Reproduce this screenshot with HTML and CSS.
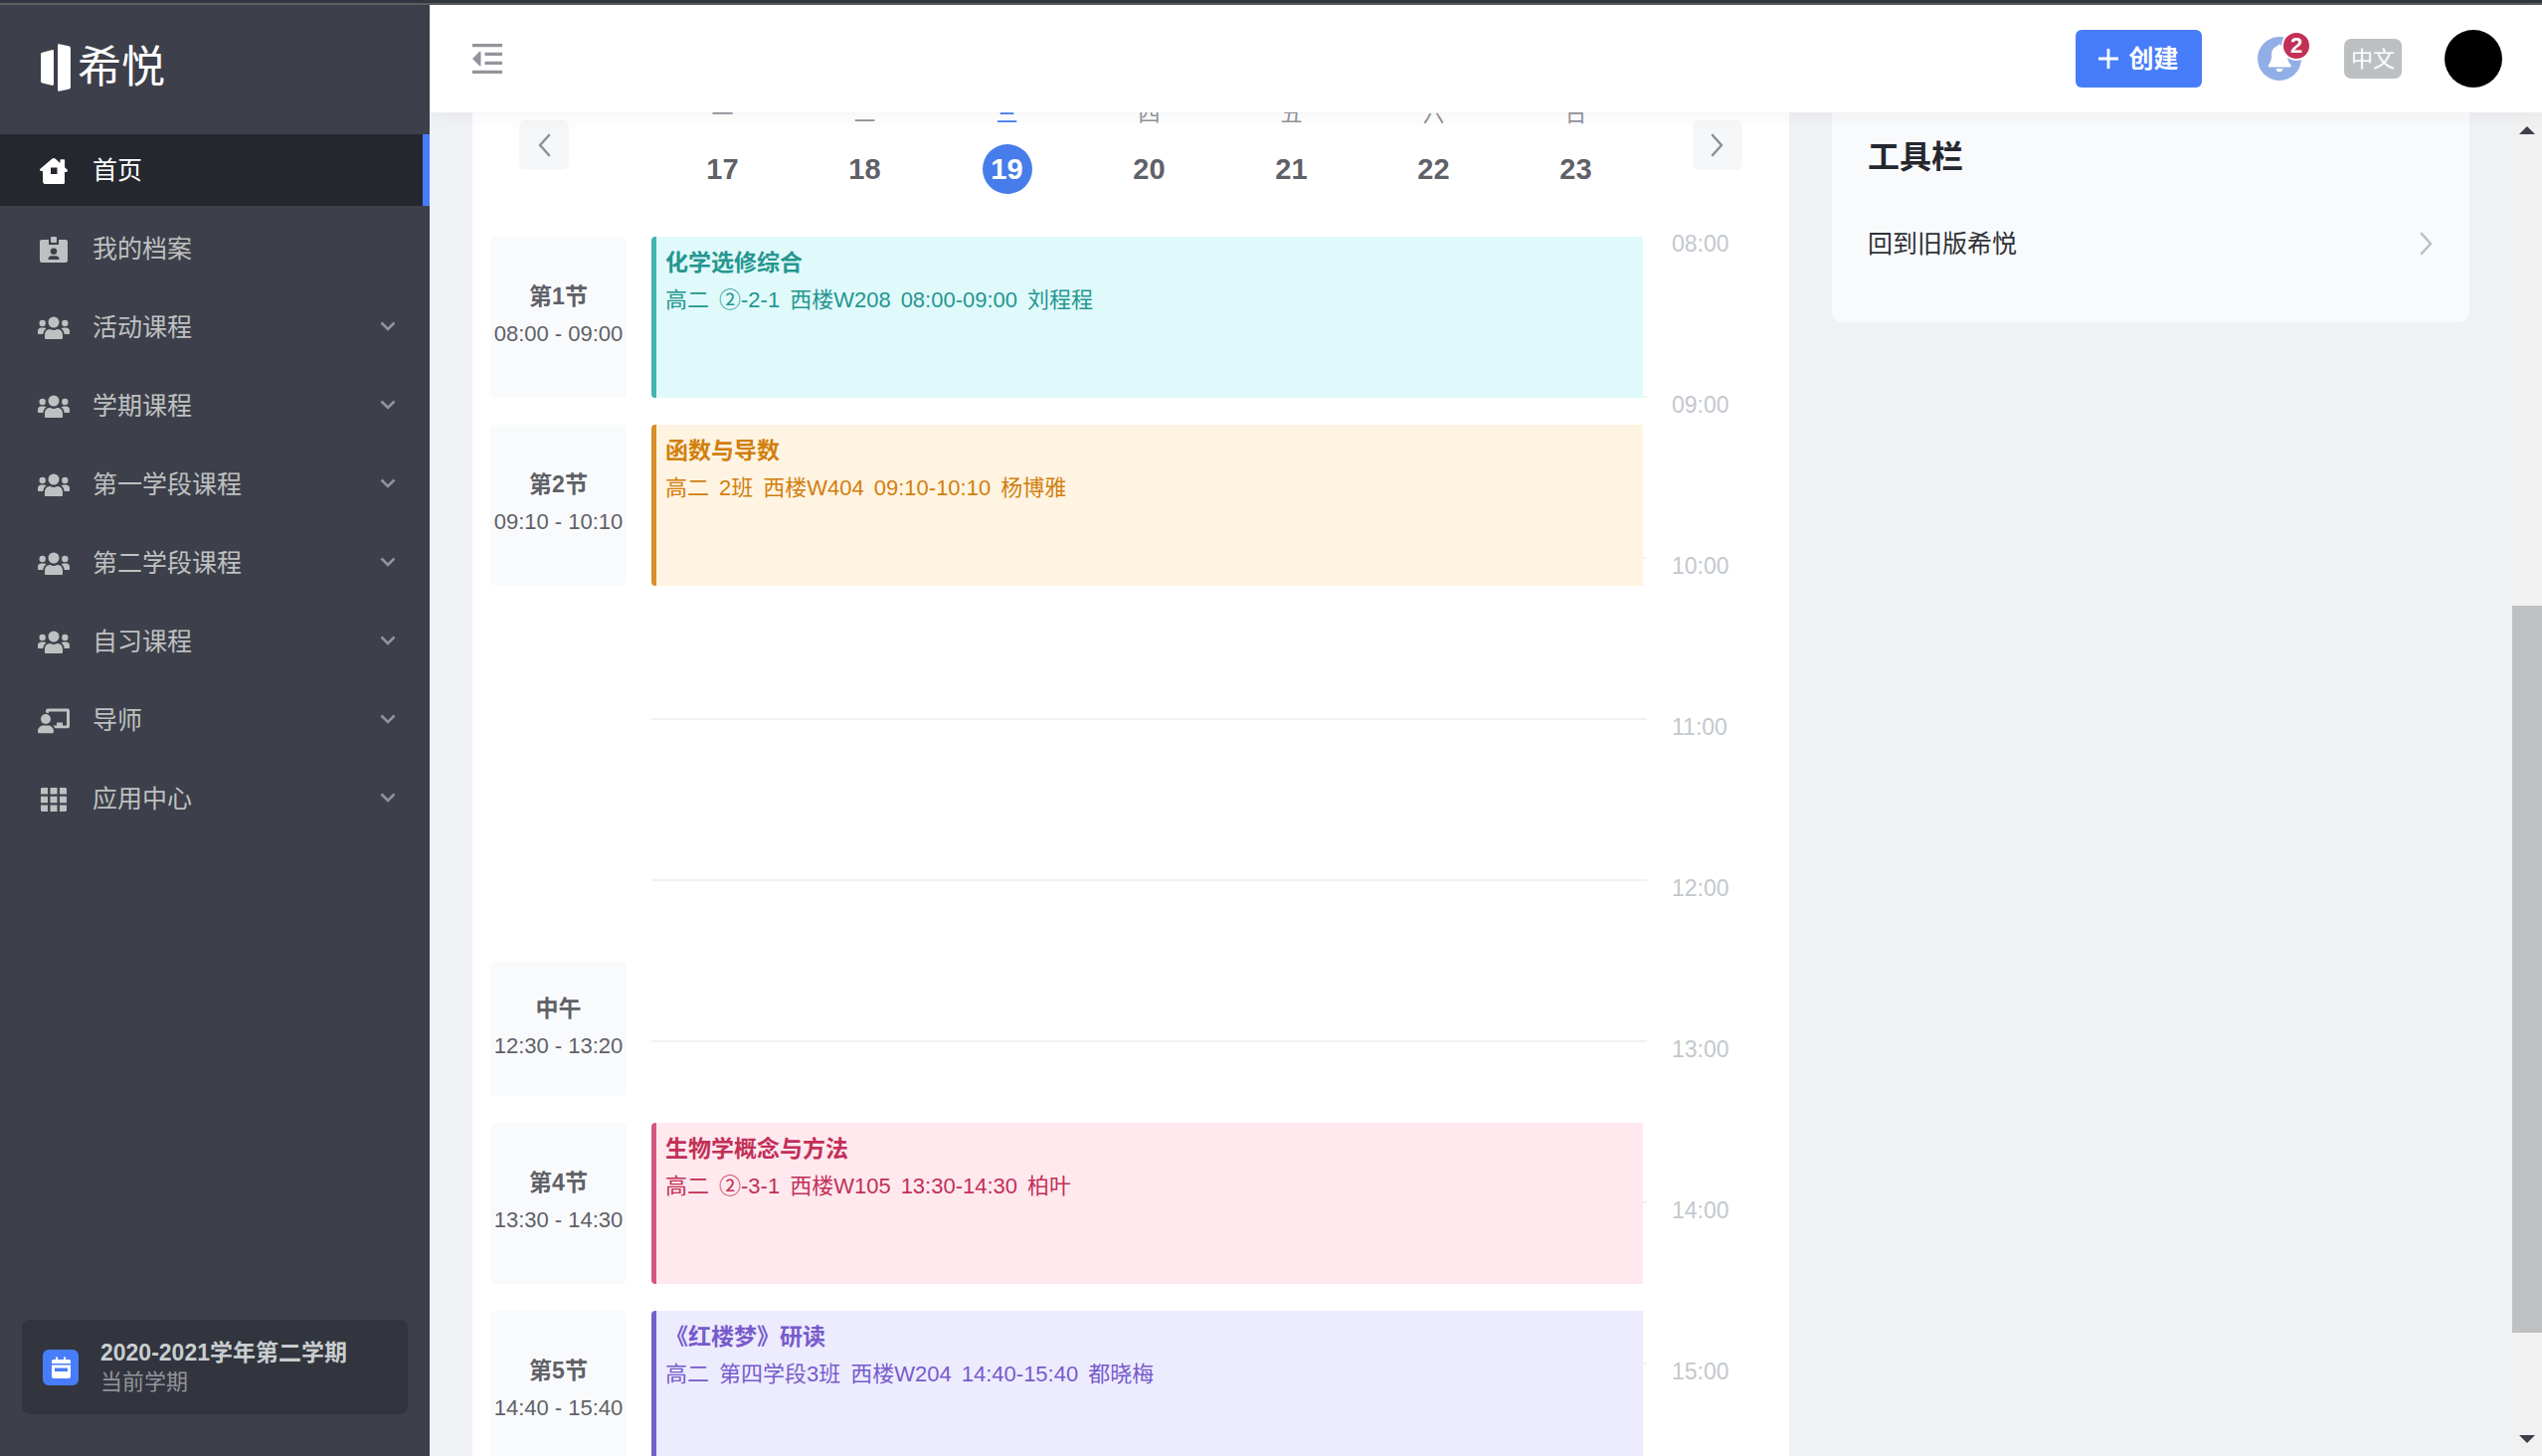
FILE: index.html
```html
<!DOCTYPE html>
<html lang="zh-CN">
<head>
<meta charset="utf-8">
<title>希悦</title>
<link rel="stylesheet" href="styles.css">
</head>
<body>
<svg class="sprite" aria-hidden="true">
  <symbol id="i-group" viewBox="0 0 32 24">
    <circle cx="16" cy="6" r="5.5"/><circle cx="4.7" cy="7" r="3.2"/><circle cx="27.3" cy="7" r="3.2"/>
    <path d="M7 22v-3c0-4 2.500-6 5.500-6 1.200.6 2.300.9 3.500.9s2.300-.3 3.500-.9c3 0 5.500 2 5.500 6v3c0 .7-.5 1-1 1H8c-.5 0-1-.3-1-1z"/>
    <path d="M0 15c0-2 1.500-3.500 3.500-3.500h2.500c.9 0 1.800.4 2.400 1C6.500 13.700 5.600 15.500 5.300 18H1c-.6 0-1-.4-1-1zM32 15c0-2-1.500-3.500-3.500-3.500H26c-.9 0-1.800.4-2.400 1 1.900 1.200 2.800 3 3.100 5.500H31c.6 0 1-.4 1-1z"/>
  </symbol>
  <symbol id="i-down" viewBox="0 0 16 10"><path d="M1.500 1.500 8 8l6.500-6.500" fill="none" stroke="currentColor" stroke-width="2.600"/></symbol>
  <symbol id="i-left" viewBox="0 0 14 24"><path d="M12 2 3 12l9 10" fill="none" stroke="currentColor" stroke-width="2.600" stroke-linecap="round" stroke-linejoin="round"/></symbol>
  <symbol id="i-right" viewBox="0 0 14 24"><path d="m2 2 9 10-9 10" fill="none" stroke="currentColor" stroke-width="2.600" stroke-linecap="round" stroke-linejoin="round"/></symbol>
</svg>
<div class="strip"></div>
<div class="app">
  <aside class="sidebar">
    <a class="brand" href="#">
      <svg width="30" height="48" viewBox="0 0 30 48"><path d="M0 10.500Q0 9 1.500 8.700L11 6.200Q13 5.800 13 7.500v33q0 1.700-2 1.300L1.500 39.500Q0 39.200 0 37.500zM17 1.500Q17 0 18.500.2L28 2.200Q30 2.600 30 4.500v39q0 1.900-2 2.300l-9.500 2Q17 48 17 46.500z"/></svg>
      <span>希悦</span>
    </a>
    <nav class="menu">
      <a class="item active" href="#">
        <svg width="28" height="26" viewBox="0 0 28 26"><path fill-rule="evenodd" d="M14 0q.8 0 1.500.6L20.500 5V2q0-.8.8-.8h3q.8 0 .8.800v7.300l2.400 2.300q.7.800.4 1.500-.3.800-1.200.8H25v10.500q0 1.500-1.500 1.500h-19Q3 25.100 3 23.600V13.100H1.300q-.9 0-1.200-.8-.3-.7.4-1.500L12.500.6Q13.200 0 14 0zM11 9.500v6.500h6.500V9.500z"/></svg>
        <span>首页</span>
      </a>
      <a class="item" href="#">
        <svg width="28" height="26" viewBox="0 0 28 26"><rect x="11" y="0" width="6" height="6" rx="1"/><path fill-rule="evenodd" d="M2 3h7v5h10V3h7q2 0 2 2v19q0 2-2 2H2q-2 0-2-2V5q0-2 2-2zM14 11.500a3.300 3.300 0 1 0 0 6.600 3.300 3.300 0 0 0 0-6.600zM8.500 23h11q0-3.700-3.500-3.700h-4q-3.500 0-3.500 3.700z"/></svg>
        <span>我的档案</span>
      </a>
      <a class="item" href="#"><svg width="32" height="24"><use href="#i-group"/></svg><span>活动课程</span><svg class="arrow" width="16" height="10"><use href="#i-down"/></svg></a>
      <a class="item" href="#"><svg width="32" height="24"><use href="#i-group"/></svg><span>学期课程</span><svg class="arrow" width="16" height="10"><use href="#i-down"/></svg></a>
      <a class="item" href="#"><svg width="32" height="24"><use href="#i-group"/></svg><span>第一学段课程</span><svg class="arrow" width="16" height="10"><use href="#i-down"/></svg></a>
      <a class="item" href="#"><svg width="32" height="24"><use href="#i-group"/></svg><span>第二学段课程</span><svg class="arrow" width="16" height="10"><use href="#i-down"/></svg></a>
      <a class="item" href="#"><svg width="32" height="24"><use href="#i-group"/></svg><span>自习课程</span><svg class="arrow" width="16" height="10"><use href="#i-down"/></svg></a>
      <a class="item" href="#">
        <svg width="32" height="26" viewBox="0 0 32 26"><circle cx="8" cy="11" r="5"/><path d="M0 23.500C0 20 2.500 17.500 5.500 17.500h5c3 0 5.500 2.500 5.500 6 0 1-.5 1.800-1.500 1.800h-13C.5 25.300 0 24.500 0 23.500zM8 4.500V2.500Q8 .5 10 .5h20q2 0 2 2v15.800q0 2-2 2H17.300q-.8-1.600-2-2.800H19v-3h6v3h4V3.500H11v1.700Q9.600 4.500 8 4.500z"/></svg>
        <span>导师</span><svg class="arrow" width="16" height="10"><use href="#i-down"/></svg>
      </a>
      <a class="item" href="#">
        <svg width="26" height="24" viewBox="0 0 26 24"><path d="M1 0h6v6.500H0V1zM9.500 0h7v6.500h-7zM19 0h6l1 1v5.500h-7zM0 8.800h7v6.400H0zM9.500 8.800h7v6.400h-7zM19 8.800h7v6.400h-7zM0 17.500h7V24H1l-1-1zM9.500 17.500h7V24h-7zM19 17.500h7V23l-1 1h-6z"/></svg>
        <span>应用中心</span><svg class="arrow" width="16" height="10"><use href="#i-down"/></svg>
      </a>
    </nav>
    <div class="term">
      <svg width="36" height="36" viewBox="0 0 36 36"><rect width="36" height="36" rx="6" fill="#477dfa"/><path fill="#fff" fill-rule="evenodd" d="M9 14v-2.500Q9 10 10.500 10H13V7.500h2V10h6V7.500h2V10h3.500q1.500 0 1.500 1.500V14zM9 15.500h19V27q0 2-2 2H11q-2 0-2-2zM12 18.500V22h13v-3.500z"/></svg>
      <div><strong>2020-2021学年第二学期</strong><span>当前学期</span></div>
    </div>
  </aside>
  <div class="main">
    <header class="topbar">
      <button class="fold" aria-label="收起菜单"><svg width="30" height="30" viewBox="0 0 30 30"><path d="M0 0h30v3.200H0zM12.500 8.800H30V12H12.500zM12.500 17.800H30V21H12.500zM0 26.800h30V30H0zM0 15l7-7q1.500-1 1.500.5v13q0 1.500-1.500.5z"/></svg></button>
      <button class="create"><svg width="20" height="20" viewBox="0 0 20 20"><path d="M10 0v20M0 10h20" stroke="#fff" stroke-width="2.800"/></svg><span>创建</span></button>
      <button class="bell" aria-label="通知"><svg width="44" height="44" viewBox="0 0 44 44"><circle cx="22" cy="22" r="22" fill="#92aee6"/><path fill="#fff" d="M22 7.500q1.600 0 1.800 1.800c4.200 1 6.200 4.200 6.200 8.200 0 5.500.8 7.500 3.300 10.500.9 1.200.4 2.500-1 2.500H12.200c-1.600 0-2-1.300-1-2.500C13.500 25 14 23 14 17.500c0-4 2.200-7.200 6.200-8.200q.2-1.800 1.800-1.800zM18.500 32h7q-.5 3.300-3.500 3.300t-3.500-3.300z"/></svg><span class="badge">2</span></button>
      <button class="lang">中文</button>
      <a class="avatar" href="#" aria-label="个人中心"></a>
    </header>
    <div class="viewport">
      <div class="content">
        <section class="card">
          <div class="week cols">
            <button class="step" aria-label="上一周"><svg width="14" height="24"><use href="#i-left"/></svg></button>
            <div class="days">
              <div class="day"><span>一</span><b>17</b></div>
              <div class="day"><span>二</span><b>18</b></div>
              <div class="day today"><span>三</span><b>19</b></div>
              <div class="day"><span>四</span><b>20</b></div>
              <div class="day"><span>五</span><b>21</b></div>
              <div class="day"><span>六</span><b>22</b></div>
              <div class="day"><span>日</span><b>23</b></div>
            </div>
            <button class="step next" aria-label="下一周"><svg width="14" height="24"><use href="#i-right"/></svg></button>
          </div>
          <div class="timeline cols">
            <i class="hour h08"></i><i class="hour h09"></i><i class="hour h10"></i><i class="hour h11"></i><i class="hour h12"></i><i class="hour h13"></i><i class="hour h14"></i><i class="hour h15"></i>
            <time class="h08">08:00</time><time class="h09">09:00</time><time class="h10">10:00</time><time class="h11">11:00</time><time class="h12">12:00</time><time class="h13">13:00</time><time class="h14">14:00</time><time class="h15">15:00</time>
            <div class="period p1"><b>第1节</b><span>08:00 - 09:00</span></div>
            <div class="period p2"><b>第2节</b><span>09:10 - 10:10</span></div>
            <div class="period noon"><b>中午</b><span>12:30 - 13:20</span></div>
            <div class="period p4"><b>第4节</b><span>13:30 - 14:30</span></div>
            <div class="period p5"><b>第5节</b><span>14:40 - 15:40</span></div>
            <a class="event p1 teal" href="#"><b>化学选修综合</b><div class="info"><span>高二</span><span>②-2-1</span><span>西楼W208</span><span>08:00-09:00</span><span>刘程程</span></div></a>
            <a class="event p2 amber" href="#"><b>函数与导数</b><div class="info"><span>高二</span><span>2班</span><span>西楼W404</span><span>09:10-10:10</span><span>杨博雅</span></div></a>
            <a class="event p4 rose" href="#"><b>生物学概念与方法</b><div class="info"><span>高二</span><span>②-3-1</span><span>西楼W105</span><span>13:30-14:30</span><span>柏叶</span></div></a>
            <a class="event p5 violet" href="#"><b>《红楼梦》研读</b><div class="info"><span>高二</span><span>第四学段3班</span><span>西楼W204</span><span>14:40-15:40</span><span>都晓梅</span></div></a>
          </div>
        </section>
        <section class="tools">
          <h2>工具栏</h2>
          <a href="#"><span>回到旧版希悦</span><svg width="14" height="24"><use href="#i-right"/></svg></a>
        </section>
      </div>
      <div class="scroll">
        <div class="rail before"><svg width="16" height="8"><path d="M0 8 8 0l8 8z"/></svg></div>
        <div class="thumb"></div>
        <div class="rail after"><svg width="16" height="8"><path d="m0 0 8 8 8-8z"/></svg></div>
      </div>
    </div>
  </div>
</div>
</body>
</html>
```
FILE: styles.css
```css
* { box-sizing: border-box; }
body {
  margin: 0;
  height: 100vh;
  display: flex;
  flex-direction: column;
  overflow: hidden;
  font: 22px/1 "Liberation Sans", "Noto Sans CJK SC", sans-serif;
  color: #5f6167;
  background: #f0f1f5;
}
a { color: inherit; text-decoration: none; }
button { font: inherit; color: inherit; border: 0; padding: 0; background: none; cursor: pointer; }
svg { display: block; fill: currentColor; flex: none; }
.sprite { position: absolute; width: 0; height: 0; }

.strip { flex: none; height: 5px; background: #323841; border-bottom: 2px solid #5c5e62; }
.app { flex: 1; min-height: 0; display: flex; }

/* sidebar */
.sidebar {
  flex: none;
  width: 432px;
  display: flex;
  flex-direction: column;
  background: #3d404a;
  color: #bfc0c1;
}
.brand { height: 130px; padding: 0 0 4px 41px; display: flex; align-items: center; gap: 7px; color: #fff; font-size: 44px; }
.menu { flex: 1; display: flex; flex-direction: column; gap: 7px; font-size: 25px; }
.item { height: 72px; padding: 1px 34px 0 36px; display: grid; grid-template-columns: 36px 1fr 16px; gap: 21px; align-items: center; }
.item svg { justify-self: center; }
.item .arrow { color: #92949b; margin-bottom: 4px; }
.active { background: #25272f; color: #fff; border-right: 7px solid #477dfa; }
.term { margin: 0 22px 42px; padding: 0 21px; height: 95px; display: flex; align-items: center; gap: 22px; border-radius: 8px; background: #32353d; }
.term strong, .term span { display: block; line-height: 30px; }
.term strong { font-size: 23px; color: #c8ced0; }
.term span { color: #92949b; }

/* top bar */
.main { flex: 1; min-width: 0; display: flex; flex-direction: column; }
.topbar {
  flex: none;
  position: relative;
  z-index: 1;
  height: 108px;
  padding: 0 40px 0 43px;
  display: flex;
  align-items: center;
  gap: 43px;
  background: #fff;
  box-shadow: 0 0 22px rgba(0, 0, 0, .06);
}
.fold { margin-right: auto; color: #92949b; }
.create { width: 127px; height: 58px; margin-right: 13px; display: flex; align-items: center; justify-content: center; gap: 10px; border-radius: 6px; background: #477dfa; color: #fff; font-size: 25px; font-weight: bold; }
.bell { position: relative; }
.badge {
  position: absolute;
  top: -6px;
  right: -10px;
  width: 30px;
  height: 30px;
  border: 2px solid #fff;
  border-radius: 50%;
  background: #c22f57;
  color: #fff;
  font-weight: bold;
  line-height: 26px;
}
.lang { width: 58px; height: 40px; padding-top: 2px; border-radius: 7px; background: #bdc0c2; color: #fff; }
.avatar { width: 58px; height: 58px; border-radius: 50%; background: #000; }

/* page body, partly scrolled under the top bar */
.viewport { flex: 1; min-height: 0; display: flex; }
.content { flex: 1; min-width: 0; margin-top: -20px; padding: 0 43px; display: flex; align-items: flex-start; gap: 43px; }
.card { flex: 1; min-width: 0; padding: 0 18px; background: #fff; }
.cols { display: grid; grid-template-columns: 137px 1fr 100px; column-gap: 25px; }

.week { padding-bottom: 43px; align-items: center; }
.step { width: 50px; height: 50px; margin: 3px 0 0 29px; display: grid; place-items: center; border-radius: 6px; background: #f6f7f8; color: #8f9196; }
.next { margin: 3px 29px 0 0; justify-self: end; }
.days { display: grid; grid-template-columns: repeat(7, 1fr); }
.day { display: flex; flex-direction: column; align-items: center; gap: 8px; color: #92949b; }
.day span { line-height: 44px; }
.day b { width: 50px; line-height: 50px; border-radius: 50%; text-align: center; font-size: 29px; color: #5f6167; }
.today span { color: #477dfa; }
.day.today b { background: #477dea; color: #fff; }

/* one row stands for ten minutes, starting at 08:00 */
.timeline { grid-template-rows: repeat(48, 27px); }
.hour { grid-column: 2; border-bottom: 2px solid #f0f1f2; }
time { grid-column: 3; margin-top: -4px; font-size: 23px; color: #c3c8cd; }
.h08 { grid-row: 1 / span 6; }
.h09 { grid-row: 7 / span 6; }
.h10 { grid-row: 13 / span 6; }
.h11 { grid-row: 19 / span 6; }
.h12 { grid-row: 25 / span 6; }
.h13 { grid-row: 31 / span 6; }
.h14 { grid-row: 37 / span 6; }
.h15 { grid-row: 43 / span 6; }
.p1 { grid-row: 1 / span 6; }
.p2 { grid-row: 8 / span 6; }
.noon { grid-row: 28 / span 5; }
.p4 { grid-row: 34 / span 6; }
.p5 { grid-row: 41 / span 6; }
.period { grid-column: 1; display: flex; flex-direction: column; align-items: center; justify-content: center; padding-bottom: 4px; border-radius: 5px; background: #f9fafc; }
.period b { font-size: 23px; }
.period b, .period span { line-height: 37px; white-space: nowrap; }
.event { grid-column: 2; margin-right: 4px; padding: 7px 9px; border-left: 5px solid; border-radius: 4px 0 0 4px; }
.event b { display: block; font-size: 23px; line-height: 38px; }
.info { display: flex; gap: 10px; line-height: 38px; }
.teal { background: #e0fafb; border-color: #42b4b0; color: #249690; }
.amber { background: #fff4e1; border-color: #d8902a; color: #d17f0e; }
.rose { background: #ffe9ee; border-color: #d6577d; color: #c22f57; }
.violet { background: #edecff; border-color: #7560cf; color: #775bcb; }

.tools { flex: none; width: 641px; height: 231px; padding: 41px 36px 0 36px; border-radius: 0 0 11px 11px; background: #f9fafc; color: #2f3238; }
.tools h2 { margin: 0; font-size: 32px; line-height: 48px; color: #25272f; }
.tools a { margin-top: 43px; height: 40px; display: flex; align-items: center; justify-content: space-between; font-size: 25px; }
.tools svg { color: #bdc0c2; }

/* scroll bar */
.scroll { flex: none; width: 30px; display: flex; flex-direction: column; background: #f1f1f1; color: #3d404a; }
.rail { display: flex; justify-content: center; }
.before { flex: 496; }
.before svg { margin-top: 14px; }
.thumb { flex: 731; background: #bfc0c1; }
.after { flex: 124; align-items: flex-end; }
.after svg { margin-bottom: 13px; }
```
